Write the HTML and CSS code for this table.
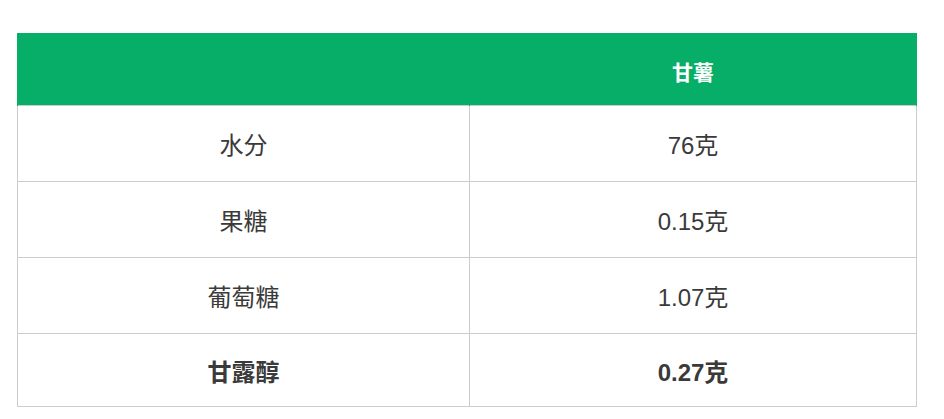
FILE: index.html
```html
<!DOCTYPE html>
<html lang="zh">
<head>
<meta charset="utf-8">
<link rel="stylesheet" href="styles.css">
</head>
<body>
<table class="nutri">
  <colgroup><col class="col-name"><col class="col-val"></colgroup>
  <thead>
    <tr><th></th><th>甘薯</th></tr>
  </thead>
  <tbody>
    <tr><td>水分</td><td>76克</td></tr>
    <tr><td>果糖</td><td>0.15克</td></tr>
    <tr><td>葡萄糖</td><td>1.07克</td></tr>
    <tr class="strong"><td>甘露醇</td><td>0.27克</td></tr>
  </tbody>
</table>
</body>
</html>
```
FILE: styles.css
```css
html, body {
  margin: 0;
  padding: 0;
  background: #fff;
}
body {
  padding: 33px 0 0 17px;
  font-family: "Liberation Sans", "Noto Sans CJK SC", sans-serif;
  color: #3a3a3a;
}
.nutri {
  width: 900px;
  border-collapse: collapse;
  table-layout: fixed;
}
.col-name { width: 452px; }
.nutri th {
  height: 69px;
  padding: 3px 0 0 0;
  background: #07ae67;
  color: #fff;
  font-size: 21px;
  font-weight: bold;
  text-align: center;
  border-left: 1px solid #10a062;
  border-right: 1px solid #07ae67;
}
.nutri th:first-child {
  border-left: 1px solid #07ae67;
}
.nutri td {
  height: 75px;
  padding: 0;
  border: 1px solid #cccccc;
  text-align: center;
  font-size: 24px;
}
.nutri .strong td {
  font-weight: bold;
  height: 72px;
}
```
